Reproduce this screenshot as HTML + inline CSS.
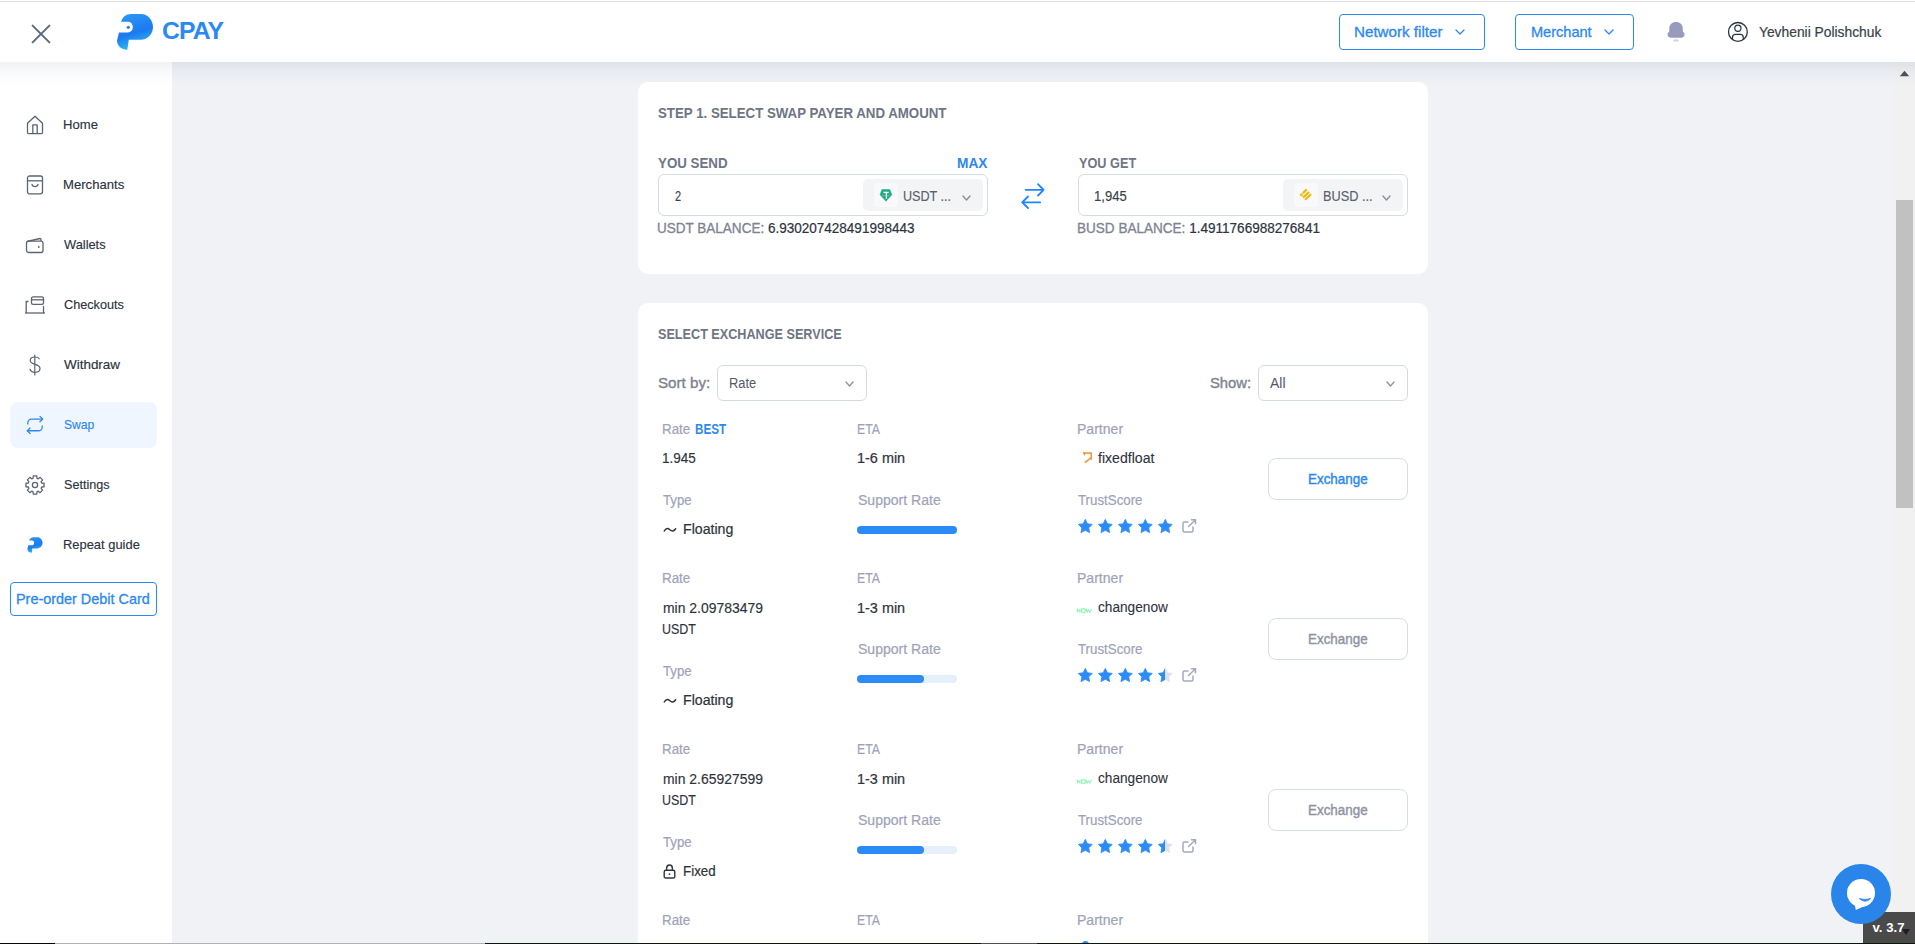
<!DOCTYPE html>
<html><head><meta charset="utf-8">
<style>
*{box-sizing:border-box;margin:0;padding:0}
html,body{width:1915px;height:944px;overflow:hidden;background:#f1f2f6;font-family:"Liberation Sans",sans-serif;color:#2e323c}
.a{position:absolute;white-space:nowrap}
</style></head><body>
<div class="a" style="left:0px;top:0px;width:1915px;height:1px;background:#fff"></div>
<div class="a" style="left:0px;top:1px;width:1915px;height:1px;background:#dcdde1"></div>
<div class="a" style="left:0px;top:2px;width:1915px;height:60px;background:#fff"></div>
<div class="a" style="left:0px;top:62px;width:1915px;height:24px;background:linear-gradient(rgba(192,200,212,0.38),rgba(192,200,212,0.16) 40%,rgba(192,200,212,0))"></div>
<div class="a" style="left:0px;top:62px;width:172px;height:882px;background:#fff"></div>
<div class="a" style="left:0px;top:62px;width:172px;height:24px;background:linear-gradient(rgba(192,200,212,0.24),rgba(192,200,212,0.1) 40%,rgba(192,200,212,0))"></div>
<svg class="a" style="left:30.5px;top:23.5px" width="20" height="20" viewBox="0 0 20 20"><path d="M1.6 1.6L18.4 18.4M18.4 1.6L1.6 18.4" stroke="#5b6b80" stroke-width="2" stroke-linecap="round"/></svg>
<svg class="a" style="left:110px;top:8px" width="50" height="50" viewBox="110 8 50 50">
<defs><linearGradient id="lg" x1="0" y1="0" x2="0.3" y2="1"><stop offset="0" stop-color="#2c9bf2"/><stop offset="0.62" stop-color="#1c7af0"/><stop offset="1" stop-color="#2bbaf4"/></linearGradient></defs>
<path d="M121.1 21.8C122.5 17 126 14.1 131 14.1L141 14.1C147.5 14.1 153 20 153 27C153 34 147.5 39.8 141 39.8L128.8 39.8L127.3 49.8C121.5 49.8 117 46 117 40.5L119 32.4L128 32.4C130.8 32.4 132.8 30.2 132.8 27.1C132.8 24 130.8 21.8 128 21.8Z" fill="url(#lg)"/>
<circle cx="128.3" cy="27.3" r="1.6" fill="#1f80ee"/></svg>
<div class="a" style="left:162.29px;top:18.72px;font-size:24.5px;font-weight:700;color:#2a89f4;line-height:24.5px;letter-spacing:-0.9px;transform:scaleX(1.0107);transform-origin:0 0;">CPAY</div>
<div class="a" style="left:1339px;top:14px;width:146px;height:36px;border:1px solid #2b88f0;border-radius:4px"></div>
<div class="a" style="left:1354.43px;top:24.85px;font-size:14.2px;font-weight:400;color:#2b88f0;line-height:14.2px;letter-spacing:0px;-webkit-text-stroke:0.3px #2b88f0;transform:scaleX(1.0688);transform-origin:0 0;">Network filter</div>
<svg class="a" style="left:1455px;top:29px" width="10" height="6" viewBox="0 0 10 6"><path d="M1 1L5.0 5L9 1" stroke="#2b88f0" stroke-width="1.3" fill="none" stroke-linecap="round" stroke-linejoin="round"/></svg>
<div class="a" style="left:1515px;top:14px;width:119px;height:36px;border:1px solid #2b88f0;border-radius:4px"></div>
<div class="a" style="left:1530.77px;top:24.85px;font-size:14.2px;font-weight:400;color:#2b88f0;line-height:14.2px;letter-spacing:0px;-webkit-text-stroke:0.3px #2b88f0;transform:scaleX(1.0258);transform-origin:0 0;">Merchant</div>
<svg class="a" style="left:1604px;top:29px" width="10" height="6" viewBox="0 0 10 6"><path d="M1 1L5.0 5L9 1" stroke="#2b88f0" stroke-width="1.3" fill="none" stroke-linecap="round" stroke-linejoin="round"/></svg>
<svg class="a" style="left:1660px;top:16px" width="30" height="30" viewBox="1660 16 30 30"><path d="M1676 22C1672.3 22 1669.3 24.5 1669.3 28.5V31.3C1669.3 31.8 1667.5 32.8 1667.5 34.6C1667.5 36.5 1669 37.8 1671 37.8H1681.1C1683.1 37.8 1684.6 36.5 1684.6 34.6C1684.6 32.8 1682.8 31.8 1682.8 31.3V28.5C1682.8 24.5 1679.8 22 1676 22Z" fill="#979cbc"/><ellipse cx="1675.9" cy="40.5" rx="2.9" ry="1.2" fill="#d3d6e4"/></svg>
<svg class="a" style="left:1720px;top:16px" width="36" height="32" viewBox="1720 16 36 32"><defs><clipPath id="uc"><circle cx="1737.9" cy="31.9" r="9.4"/></clipPath></defs><circle cx="1737.9" cy="31.9" r="9.4" fill="none" stroke="#2a3440" stroke-width="1.3"/><circle cx="1737.9" cy="28.3" r="3.1" fill="none" stroke="#2a3440" stroke-width="1.2"/><rect x="1732.5" y="34.4" width="10.8" height="12" rx="3" fill="none" stroke="#2a3440" stroke-width="1.2" clip-path="url(#uc)"/></svg>
<div class="a" style="left:1758.50px;top:24.85px;font-size:14.2px;font-weight:400;color:#3a3f49;line-height:14.2px;letter-spacing:0px;-webkit-text-stroke:0.2px #3a3f49;transform:scaleX(0.9733);transform-origin:0 0;">Yevhenii Polishchuk</div>
<div class="a" style="left:10px;top:402px;width:147px;height:46px;background:#eff6ff;border-radius:8px"></div>
<div class="a" style="left:62.71px;top:117.91px;font-size:13.2px;font-weight:400;color:#2c3340;line-height:13.2px;letter-spacing:0px;-webkit-text-stroke:0.15px #2c3340;transform:scaleX(0.9928);transform-origin:0 0;">Home</div>
<div class="a" style="left:62.71px;top:177.91px;font-size:13.2px;font-weight:400;color:#2c3340;line-height:13.2px;letter-spacing:0px;-webkit-text-stroke:0.15px #2c3340;transform:scaleX(0.9939);transform-origin:0 0;">Merchants</div>
<div class="a" style="left:63.70px;top:237.91px;font-size:13.2px;font-weight:400;color:#2c3340;line-height:13.2px;letter-spacing:0px;-webkit-text-stroke:0.15px #2c3340;transform:scaleX(0.9734);transform-origin:0 0;">Wallets</div>
<div class="a" style="left:63.70px;top:297.91px;font-size:13.2px;font-weight:400;color:#2c3340;line-height:13.2px;letter-spacing:0px;-webkit-text-stroke:0.15px #2c3340;transform:scaleX(0.9615);transform-origin:0 0;">Checkouts</div>
<div class="a" style="left:63.70px;top:357.91px;font-size:13.2px;font-weight:400;color:#2c3340;line-height:13.2px;letter-spacing:0px;-webkit-text-stroke:0.15px #2c3340;transform:scaleX(1.0192);transform-origin:0 0;">Withdraw</div>
<div class="a" style="left:63.70px;top:417.91px;font-size:13.2px;font-weight:400;color:#2b88f0;line-height:13.2px;letter-spacing:0px;-webkit-text-stroke:0.15px #2b88f0;transform:scaleX(0.9187);transform-origin:0 0;">Swap</div>
<div class="a" style="left:63.70px;top:477.91px;font-size:13.2px;font-weight:400;color:#2c3340;line-height:13.2px;letter-spacing:0px;-webkit-text-stroke:0.15px #2c3340;transform:scaleX(0.9572);transform-origin:0 0;">Settings</div>
<div class="a" style="left:62.72px;top:537.91px;font-size:13.2px;font-weight:400;color:#2c3340;line-height:13.2px;letter-spacing:0px;-webkit-text-stroke:0.15px #2c3340;transform:scaleX(0.9790);transform-origin:0 0;">Repeat guide</div>
<svg class="a" style="left:26px;top:115px" width="18" height="20" viewBox="0 0 18 20" fill="none" stroke="#5b6474" stroke-width="1.3" stroke-linejoin="round"><path d="M1.5 8.3L9 1.2L16.5 8.3V17.6C16.5 18.2 16.1 18.6 15.5 18.6H2.5C1.9 18.6 1.5 18.2 1.5 17.6Z"/><path d="M6.8 18.6V9.8H11.2V18.6"/></svg>
<svg class="a" style="left:26px;top:175px" width="18" height="20" viewBox="0 0 18 20" fill="none" stroke="#5b6474" stroke-width="1.3" stroke-linejoin="round"><rect x="1.5" y="1" width="15" height="17.8" rx="2"/><path d="M1.5 5.8H16.5"/><path d="M6 9.4C6.6 12.4 11.4 12.4 12 9.4" stroke-linecap="round"/></svg>
<svg class="a" style="left:25px;top:236px" width="20" height="18" viewBox="0 0 20 18" fill="none" stroke="#5b6474" stroke-width="1.3" stroke-linejoin="round"><path d="M2 5.5L15 2.5C15.5 2.4 16 2.8 16 3.3V5"/><rect x="1.5" y="5.2" width="16.5" height="11.3" rx="2"/><circle cx="13.8" cy="11" r="0.9" fill="#5b6474" stroke="none"/></svg>
<svg class="a" style="left:24px;top:295px" width="22" height="20" viewBox="0 0 22 20" fill="none" stroke="#5b6474" stroke-width="1.3"><path d="M1 18H21"/><path d="M2.2 18V6.5H4.5"/><path d="M19.5 18V11"/><rect x="7.5" y="1.8" width="12" height="7.5" rx="1.6"/><path d="M7.5 4.8H19.5"/></svg>
<svg class="a" style="left:28px;top:354px" width="14" height="22" viewBox="0 0 14 22" fill="none" stroke="#5b6474" stroke-width="1.2" stroke-linecap="round"><path d="M6.8 1V21"/><path d="M11.2 4.8C10.6 3.7 9.2 3 7 3C4 3 2.2 4.5 2.2 6.6C2.2 11.6 12 9.2 12 14.5C12 16.8 10 18.3 7 18.3C4.3 18.3 2.6 17.2 2 15.3"/></svg>
<svg class="a" style="left:26px;top:414.5px" width="18" height="19.8" viewBox="0 0 20 22" fill="none" stroke="#2b88f0" stroke-width="1.4" stroke-linecap="round" stroke-linejoin="round"><path d="M15.5 1.5L18.5 4.5L15.5 7.5"/><path d="M2 10V8.5C2 6.3 3.8 4.5 6 4.5H18.5"/><path d="M4.5 20.5L1.5 17.5L4.5 14.5"/><path d="M18 12V13.5C18 15.7 16.2 17.5 14 17.5H1.5"/></svg>
<svg class="a" style="left:25px;top:475px" width="20" height="20" viewBox="0 0 20 20" fill="none" stroke="#5b6474" stroke-width="1.3" stroke-linejoin="round"><path d="M8.01 3.29 L8.24 0.97 L11.76 0.97 L11.99 3.29 L13.34 3.85 L15.14 2.37 L17.63 4.86 L16.15 6.66 L16.71 8.01 L19.03 8.24 L19.03 11.76 L16.71 11.99 L16.15 13.34 L17.63 15.14 L15.14 17.63 L13.34 16.15 L11.99 16.71 L11.76 19.03 L8.24 19.03 L8.01 16.71 L6.66 16.15 L4.86 17.63 L2.37 15.14 L3.85 13.34 L3.29 11.99 L0.97 11.76 L0.97 8.24 L3.29 8.01 L3.85 6.66 L2.37 4.86 L4.86 2.37 L6.66 3.85Z"/><circle cx="10" cy="10" r="2.6"/></svg>
<svg class="a" style="left:27px;top:537px" width="16" height="16.5" viewBox="116 13.5 38 38" preserveAspectRatio="none"><path d="M121.1 21.8C122.5 17 126 14.1 131 14.1L141 14.1C147.5 14.1 153 20 153 27C153 34 147.5 39.8 141 39.8L128.8 39.8L127.3 49.8C121.5 49.8 117 46 117 40.5L119 32.4L128 32.4C130.8 32.4 132.8 30.2 132.8 27.1C132.8 24 130.8 21.8 128 21.8Z" fill="url(#lg)"/></svg>
<div class="a" style="left:10px;top:582px;width:147px;height:34px;border:1px solid #2b88f0;border-radius:4px"></div>
<div class="a" style="left:16.48px;top:592.15px;font-size:14.2px;font-weight:400;color:#2b88f0;line-height:14.2px;letter-spacing:0px;-webkit-text-stroke:0.3px #2b88f0;transform:scaleX(1.0155);transform-origin:0 0;">Pre-order Debit Card</div>
<div class="a" style="left:638px;top:82px;width:790px;height:192px;background:#fff;border-radius:10px"></div>
<div class="a" style="left:658.00px;top:105.69px;font-size:14.6px;font-weight:700;color:#6e7585;line-height:14.6px;letter-spacing:0px;transform:scaleX(0.9098);transform-origin:0 0;">STEP 1. SELECT SWAP PAYER AND AMOUNT</div>
<div class="a" style="left:658.00px;top:155.78px;font-size:14px;font-weight:700;color:#6e7585;line-height:14px;letter-spacing:0px;transform:scaleX(0.9519);transform-origin:0 0;">YOU SEND</div>
<div class="a" style="left:956.80px;top:155.78px;font-size:14px;font-weight:700;color:#2b88f0;line-height:14px;letter-spacing:0px;transform:scaleX(0.9757);transform-origin:0 0;">MAX</div>
<div class="a" style="left:658px;top:174px;width:330px;height:42px;border:1px solid #d5dce7;border-radius:6px;background:#fff"></div>
<div class="a" style="left:675.20px;top:188.98px;font-size:14px;font-weight:400;color:#3a3f48;line-height:14px;letter-spacing:0px;-webkit-text-stroke:0.15px #3a3f48;transform:scaleX(0.7875);transform-origin:0 0;">2</div>
<div class="a" style="left:863px;top:179px;width:120px;height:32px;background:#f3f4f6;border-radius:5px"></div>
<div class="a" style="left:874px;top:183px;width:24px;height:24px;background:#f9f9fb;border-radius:4px"></div>
<div class="a" style="left:902.90px;top:188.98px;font-size:14px;font-weight:400;color:#5b606b;line-height:14px;letter-spacing:0px;-webkit-text-stroke:0.15px #5b606b;transform:scaleX(0.9000);transform-origin:0 0;">USDT ...</div>
<svg class="a" style="left:961.5px;top:194.5px" width="9" height="6" viewBox="0 0 9 6"><path d="M1 1L4.5 5L8 1" stroke="#8a8f9b" stroke-width="1.4" fill="none" stroke-linecap="round" stroke-linejoin="round"/></svg>
<div class="a" style="left:657.03px;top:220.88px;font-size:14px;font-weight:400;color:#7d8392;line-height:14px;letter-spacing:0px;-webkit-text-stroke:0.3px #7d8392;transform:scaleX(0.9655);transform-origin:0 0;">USDT BALANCE: <span style="color:#2d3440;-webkit-text-stroke:0.2px #2d3440">6.930207428491998443</span></div>
<div class="a" style="left:1078px;top:174px;width:330px;height:42px;border:1px solid #d5dce7;border-radius:6px;background:#fff"></div>
<div class="a" style="left:1094.27px;top:188.98px;font-size:14px;font-weight:400;color:#3a3f48;line-height:14px;letter-spacing:0px;-webkit-text-stroke:0.15px #3a3f48;transform:scaleX(0.9344);transform-origin:0 0;">1,945</div>
<div class="a" style="left:1283px;top:179px;width:120px;height:32px;background:#f3f4f6;border-radius:5px"></div>
<div class="a" style="left:1294px;top:183px;width:24px;height:24px;background:#f9f9fb;border-radius:4px"></div>
<div class="a" style="left:1322.89px;top:188.98px;font-size:14px;font-weight:400;color:#5b606b;line-height:14px;letter-spacing:0px;-webkit-text-stroke:0.15px #5b606b;transform:scaleX(0.9093);transform-origin:0 0;">BUSD ...</div>
<svg class="a" style="left:1381.5px;top:194.5px" width="9" height="6" viewBox="0 0 9 6"><path d="M1 1L4.5 5L8 1" stroke="#8a8f9b" stroke-width="1.4" fill="none" stroke-linecap="round" stroke-linejoin="round"/></svg>
<div class="a" style="left:1077.03px;top:220.88px;font-size:14px;font-weight:400;color:#7d8392;line-height:14px;letter-spacing:0px;-webkit-text-stroke:0.3px #7d8392;transform:scaleX(0.9674);transform-origin:0 0;">BUSD BALANCE: <span style="color:#2d3440;-webkit-text-stroke:0.2px #2d3440">1.4911766988276841</span></div>
<div class="a" style="left:1078.80px;top:155.78px;font-size:14px;font-weight:700;color:#6e7585;line-height:14px;letter-spacing:0px;transform:scaleX(0.9077);transform-origin:0 0;">YOU GET</div>
<svg class="a" style="left:879px;top:188.5px" width="14" height="14" viewBox="0 0 14 14"><path d="M2.9 0.5H10.8L12.9 5.8L7 12.3L1 5.8Z" fill="#22ab84" stroke="#22ab84" stroke-width="0.5" stroke-linejoin="round"/><path d="M4.5 3.4H9.7M7.4 3.4V9.8" stroke="#fff" stroke-width="1.3"/><path d="M3 6C5.5 6.8 8.5 6.8 11 6" stroke="#7fd6bb" stroke-width="0.5" fill="none"/></svg>
<svg class="a" style="left:1290px;top:180px" width="30" height="30" viewBox="1290 180 30 30" stroke="#efb80c" stroke-width="2.2" stroke-linecap="round"><path d="M1303.4 192.6L1306.1 190"/><path d="M1303.6 197.1L1308.3 192.6"/><path d="M1305.7 199.2L1310.4 194.7"/><circle cx="1301.4" cy="194.8" r="0.5" fill="#efb80c"/></svg>
<svg class="a" style="left:1012px;top:175px" width="40" height="40" viewBox="0 0 40 40" fill="none" stroke="#1f86fb" stroke-width="1.8" stroke-linecap="round" stroke-linejoin="round"><path d="M13.6 14.8H31.6M26 9.2L31.6 14.8L26 20.5"/><path d="M28.2 27.3H10.2M16 21.5L10.2 27.3L16 33"/></svg>
<div class="a" style="left:638px;top:303px;width:790px;height:700px;background:#fff;border-radius:10px"></div>
<div class="a" style="left:658.00px;top:326.95px;font-size:14.2px;font-weight:700;color:#6e7585;line-height:14.2px;letter-spacing:0px;transform:scaleX(0.8906);transform-origin:0 0;">SELECT EXCHANGE SERVICE</div>
<div class="a" style="left:658.00px;top:375.78px;font-size:14px;font-weight:400;color:#7e8390;line-height:14px;letter-spacing:0px;-webkit-text-stroke:0.35px #7e8390;transform:scaleX(1.0813);transform-origin:0 0;">Sort by:</div>
<div class="a" style="left:717px;top:365px;width:150px;height:36px;border:1px solid #d3dae6;border-radius:6px;background:#fff"></div>
<div class="a" style="left:728.88px;top:375.78px;font-size:14px;font-weight:400;color:#525868;line-height:14px;letter-spacing:0px;transform:scaleX(0.9206);transform-origin:0 0;">Rate</div>
<svg class="a" style="left:844.5px;top:381px" width="9" height="6" viewBox="0 0 9 6"><path d="M1 1L4.5 5L8 1" stroke="#8e94a5" stroke-width="1.4" fill="none" stroke-linecap="round" stroke-linejoin="round"/></svg>
<div class="a" style="left:1210.00px;top:375.78px;font-size:14px;font-weight:400;color:#7e8390;line-height:14px;letter-spacing:0px;-webkit-text-stroke:0.35px #7e8390;transform:scaleX(1.0573);transform-origin:0 0;">Show:</div>
<div class="a" style="left:1258px;top:365px;width:150px;height:36px;border:1px solid #d3dae6;border-radius:6px;background:#fff"></div>
<div class="a" style="left:1270.00px;top:375.78px;font-size:14px;font-weight:400;color:#525868;line-height:14px;letter-spacing:0px;">All</div>
<svg class="a" style="left:1386px;top:381px" width="9" height="6" viewBox="0 0 9 6"><path d="M1 1L4.5 5L8 1" stroke="#8e94a5" stroke-width="1.4" fill="none" stroke-linecap="round" stroke-linejoin="round"/></svg>
<div class="a" style="left:661.64px;top:421.78px;font-size:14px;font-weight:400;color:#9ea2ba;line-height:14px;letter-spacing:0px;-webkit-text-stroke:0.2px #9ea2ba;transform:scaleX(0.9553);transform-origin:0 0;">Rate</div>
<div class="a" style="left:695.00px;top:421.78px;font-size:14px;font-weight:700;color:#2b88f0;line-height:14px;letter-spacing:0px;transform:scaleX(0.8310);transform-origin:0 0;">BEST</div>
<div class="a" style="left:661.64px;top:451.38px;font-size:14px;font-weight:400;color:#2f333c;line-height:14px;letter-spacing:0px;-webkit-text-stroke:0.15px #2f333c;transform:scaleX(0.9636);transform-origin:0 0;">1.945</div>
<div class="a" style="left:662.60px;top:492.98px;font-size:14px;font-weight:400;color:#9ea2ba;line-height:14px;letter-spacing:0px;-webkit-text-stroke:0.2px #9ea2ba;transform:scaleX(0.9455);transform-origin:0 0;">Type</div>
<svg class="a" style="left:663px;top:525.90px" width="14" height="8" viewBox="0 0 14 8"><path d="M1.3 5C2.8 2.4 4.6 1.8 6.8 3.8C9 5.8 10.8 5.5 12.7 2.8" stroke="#30343c" stroke-width="1.5" fill="none" stroke-linecap="round"/></svg>
<div class="a" style="left:682.69px;top:522.28px;font-size:14px;font-weight:400;color:#2f333c;line-height:14px;letter-spacing:0px;-webkit-text-stroke:0.2px #2f333c;transform:scaleX(1.0100);transform-origin:0 0;">Floating</div>
<div class="a" style="left:857.03px;top:421.78px;font-size:14px;font-weight:400;color:#9ea2ba;line-height:14px;letter-spacing:0px;-webkit-text-stroke:0.2px #9ea2ba;transform:scaleX(0.8743);transform-origin:0 0;">ETA</div>
<div class="a" style="left:856.87px;top:451.18px;font-size:14px;font-weight:400;color:#2f333c;line-height:14px;letter-spacing:0px;-webkit-text-stroke:0.2px #2f333c;transform:scaleX(1.0313);transform-origin:0 0;">1-6 min</div>
<div class="a" style="left:857.90px;top:492.98px;font-size:14px;font-weight:400;color:#9ea2ba;line-height:14px;letter-spacing:0px;-webkit-text-stroke:0.2px #9ea2ba;transform:scaleX(1.0035);transform-origin:0 0;">Support Rate</div>
<div class="a" style="left:857px;top:526px;width:100px;height:8px;border-radius:4px;background:#e6f0fc"><div style="position:absolute;left:0;top:0;width:100px;height:8px;border-radius:4px;background:#2b8cf8"></div></div>
<div class="a" style="left:1077.30px;top:421.78px;font-size:14px;font-weight:400;color:#9ea2ba;line-height:14px;letter-spacing:0px;-webkit-text-stroke:0.2px #9ea2ba;transform:scaleX(1.0034);transform-origin:0 0;">Partner</div>
<svg class="a" style="left:1078px;top:446.00px" width="20" height="22" viewBox="0 0 20 22" fill="none" stroke="#f68d30" stroke-width="1.5" stroke-linecap="round" stroke-linejoin="round"><path d="M5.6 6.9H13.2V13.2"/><path d="M6 7L6.7 8.6"/><path d="M12.6 12L7.3 16.3"/></svg>
<div class="a" style="left:1098.20px;top:450.58px;font-size:14px;font-weight:400;color:#2f333c;line-height:14px;letter-spacing:0px;-webkit-text-stroke:0.1px #2f333c;transform:scaleX(1.0063);transform-origin:0 0;">fixedfloat</div>
<div class="a" style="left:1078.30px;top:492.98px;font-size:14px;font-weight:400;color:#9ea2ba;line-height:14px;letter-spacing:0px;-webkit-text-stroke:0.2px #9ea2ba;transform:scaleX(0.9493);transform-origin:0 0;">TrustScore</div>
<svg class="a" style="left:1078px;top:518.6px" width="15" height="15" viewBox="0 0 15 15"><path d="M7.30 0.40 L9.39 4.83 L14.24 5.44 L10.68 8.80 L11.59 13.61 L7.30 11.25 L3.01 13.61 L3.92 8.80 L0.36 5.44 L5.21 4.83Z" fill="#2b8cf8" stroke="#2b8cf8" stroke-width="0.9" stroke-linejoin="round"/></svg>
<svg class="a" style="left:1098px;top:518.6px" width="15" height="15" viewBox="0 0 15 15"><path d="M7.30 0.40 L9.39 4.83 L14.24 5.44 L10.68 8.80 L11.59 13.61 L7.30 11.25 L3.01 13.61 L3.92 8.80 L0.36 5.44 L5.21 4.83Z" fill="#2b8cf8" stroke="#2b8cf8" stroke-width="0.9" stroke-linejoin="round"/></svg>
<svg class="a" style="left:1118px;top:518.6px" width="15" height="15" viewBox="0 0 15 15"><path d="M7.30 0.40 L9.39 4.83 L14.24 5.44 L10.68 8.80 L11.59 13.61 L7.30 11.25 L3.01 13.61 L3.92 8.80 L0.36 5.44 L5.21 4.83Z" fill="#2b8cf8" stroke="#2b8cf8" stroke-width="0.9" stroke-linejoin="round"/></svg>
<svg class="a" style="left:1138px;top:518.6px" width="15" height="15" viewBox="0 0 15 15"><path d="M7.30 0.40 L9.39 4.83 L14.24 5.44 L10.68 8.80 L11.59 13.61 L7.30 11.25 L3.01 13.61 L3.92 8.80 L0.36 5.44 L5.21 4.83Z" fill="#2b8cf8" stroke="#2b8cf8" stroke-width="0.9" stroke-linejoin="round"/></svg>
<svg class="a" style="left:1158px;top:518.6px" width="15" height="15" viewBox="0 0 15 15"><path d="M7.30 0.40 L9.39 4.83 L14.24 5.44 L10.68 8.80 L11.59 13.61 L7.30 11.25 L3.01 13.61 L3.92 8.80 L0.36 5.44 L5.21 4.83Z" fill="#2b8cf8" stroke="#2b8cf8" stroke-width="0.9" stroke-linejoin="round"/></svg>
<svg class="a" style="left:1182px;top:518.6px" width="15" height="14" viewBox="0 0 15 14" fill="none" stroke="#a5a9bd" stroke-width="1.5" stroke-linecap="round" stroke-linejoin="round"><path d="M6 3H2.5C1.7 3 1 3.7 1 4.5V11.5C1 12.3 1.7 13 2.5 13H9.5C10.3 13 11 12.3 11 11.5V8"/><path d="M6.5 7.5L13.5 0.8M9.5 0.8H13.5V4.8"/></svg>
<div class="a" style="left:1268px;top:458px;width:140px;height:42px;border:1px solid #d5dde8;border-radius:8px;background:#fff"></div>
<div class="a" style="left:1307.94px;top:471.98px;font-size:14px;font-weight:400;color:#2b88f0;line-height:14px;letter-spacing:0px;-webkit-text-stroke:0.4px #2b88f0;transform:scaleX(0.9580);transform-origin:0 0;">Exchange</div>
<div class="a" style="left:661.64px;top:571.28px;font-size:14px;font-weight:400;color:#9ea2ba;line-height:14px;letter-spacing:0px;-webkit-text-stroke:0.2px #9ea2ba;transform:scaleX(0.9553);transform-origin:0 0;">Rate</div>
<div class="a" style="left:662.60px;top:600.88px;font-size:14px;font-weight:400;color:#2f333c;line-height:14px;letter-spacing:0px;-webkit-text-stroke:0.15px #2f333c;transform:scaleX(0.9948);transform-origin:0 0;">min 2.09783479</div>
<div class="a" style="left:661.71px;top:621.98px;font-size:14px;font-weight:400;color:#2f333c;line-height:14px;letter-spacing:0px;-webkit-text-stroke:0.15px #2f333c;transform:scaleX(0.8893);transform-origin:0 0;">USDT</div>
<div class="a" style="left:662.60px;top:664.18px;font-size:14px;font-weight:400;color:#9ea2ba;line-height:14px;letter-spacing:0px;-webkit-text-stroke:0.2px #9ea2ba;transform:scaleX(0.9455);transform-origin:0 0;">Type</div>
<svg class="a" style="left:663px;top:697.10px" width="14" height="8" viewBox="0 0 14 8"><path d="M1.3 5C2.8 2.4 4.6 1.8 6.8 3.8C9 5.8 10.8 5.5 12.7 2.8" stroke="#30343c" stroke-width="1.5" fill="none" stroke-linecap="round"/></svg>
<div class="a" style="left:682.69px;top:693.48px;font-size:14px;font-weight:400;color:#2f333c;line-height:14px;letter-spacing:0px;-webkit-text-stroke:0.2px #2f333c;transform:scaleX(1.0100);transform-origin:0 0;">Floating</div>
<div class="a" style="left:857.03px;top:571.28px;font-size:14px;font-weight:400;color:#9ea2ba;line-height:14px;letter-spacing:0px;-webkit-text-stroke:0.2px #9ea2ba;transform:scaleX(0.8743);transform-origin:0 0;">ETA</div>
<div class="a" style="left:856.87px;top:600.68px;font-size:14px;font-weight:400;color:#2f333c;line-height:14px;letter-spacing:0px;-webkit-text-stroke:0.2px #2f333c;transform:scaleX(1.0313);transform-origin:0 0;">1-3 min</div>
<div class="a" style="left:857.90px;top:642.48px;font-size:14px;font-weight:400;color:#9ea2ba;line-height:14px;letter-spacing:0px;-webkit-text-stroke:0.2px #9ea2ba;transform:scaleX(1.0035);transform-origin:0 0;">Support Rate</div>
<div class="a" style="left:857px;top:675px;width:100px;height:8px;border-radius:4px;background:#e6f0fc"><div style="position:absolute;left:0;top:0;width:67px;height:8px;border-radius:4px;background:#2b8cf8"></div></div>
<div class="a" style="left:1077.30px;top:571.28px;font-size:14px;font-weight:400;color:#9ea2ba;line-height:14px;letter-spacing:0px;-webkit-text-stroke:0.2px #9ea2ba;transform:scaleX(1.0034);transform-origin:0 0;">Partner</div>
<svg class="a" style="left:1076px;top:607.50px" width="17" height="5" viewBox="0 0 17 5" fill="none" stroke="#74eea6" stroke-width="0.9" stroke-linejoin="round"><path d="M1.3 4.4V0.9L3.9 4.2V0.8"/><rect x="5.3" y="0.9" width="3.9" height="3.4"/><path d="M10.2 0.8L11.2 4.3L12.5 1.6L13.7 4.3L15.6 0.8"/></svg>
<div class="a" style="left:1097.80px;top:599.58px;font-size:14px;font-weight:400;color:#2f333c;line-height:14px;letter-spacing:0px;-webkit-text-stroke:0.1px #2f333c;transform:scaleX(0.9751);transform-origin:0 0;">changenow</div>
<div class="a" style="left:1078.30px;top:642.48px;font-size:14px;font-weight:400;color:#9ea2ba;line-height:14px;letter-spacing:0px;-webkit-text-stroke:0.2px #9ea2ba;transform:scaleX(0.9493);transform-origin:0 0;">TrustScore</div>
<svg class="a" style="left:1078px;top:668.1px" width="15" height="15" viewBox="0 0 15 15"><path d="M7.30 0.40 L9.39 4.83 L14.24 5.44 L10.68 8.80 L11.59 13.61 L7.30 11.25 L3.01 13.61 L3.92 8.80 L0.36 5.44 L5.21 4.83Z" fill="#2b8cf8" stroke="#2b8cf8" stroke-width="0.9" stroke-linejoin="round"/></svg>
<svg class="a" style="left:1098px;top:668.1px" width="15" height="15" viewBox="0 0 15 15"><path d="M7.30 0.40 L9.39 4.83 L14.24 5.44 L10.68 8.80 L11.59 13.61 L7.30 11.25 L3.01 13.61 L3.92 8.80 L0.36 5.44 L5.21 4.83Z" fill="#2b8cf8" stroke="#2b8cf8" stroke-width="0.9" stroke-linejoin="round"/></svg>
<svg class="a" style="left:1118px;top:668.1px" width="15" height="15" viewBox="0 0 15 15"><path d="M7.30 0.40 L9.39 4.83 L14.24 5.44 L10.68 8.80 L11.59 13.61 L7.30 11.25 L3.01 13.61 L3.92 8.80 L0.36 5.44 L5.21 4.83Z" fill="#2b8cf8" stroke="#2b8cf8" stroke-width="0.9" stroke-linejoin="round"/></svg>
<svg class="a" style="left:1138px;top:668.1px" width="15" height="15" viewBox="0 0 15 15"><path d="M7.30 0.40 L9.39 4.83 L14.24 5.44 L10.68 8.80 L11.59 13.61 L7.30 11.25 L3.01 13.61 L3.92 8.80 L0.36 5.44 L5.21 4.83Z" fill="#2b8cf8" stroke="#2b8cf8" stroke-width="0.9" stroke-linejoin="round"/></svg>
<svg class="a" style="left:1158px;top:668.1px" width="15" height="15" viewBox="0 0 15 15"><defs><clipPath id="hc668.1"><rect x="0" y="0" width="7" height="14"/></clipPath></defs><path d="M7.30 0.40 L9.39 4.83 L14.24 5.44 L10.68 8.80 L11.59 13.61 L7.30 11.25 L3.01 13.61 L3.92 8.80 L0.36 5.44 L5.21 4.83Z" fill="#dde2ea" stroke="#dde2ea" stroke-width="0.9" stroke-linejoin="round"/><path d="M7.30 0.40 L9.39 4.83 L14.24 5.44 L10.68 8.80 L11.59 13.61 L7.30 11.25 L3.01 13.61 L3.92 8.80 L0.36 5.44 L5.21 4.83Z" fill="#2b8cf8" stroke="#2b8cf8" stroke-width="0.9" stroke-linejoin="round" clip-path="url(#hc668.1)"/></svg>
<svg class="a" style="left:1182px;top:668.1px" width="15" height="14" viewBox="0 0 15 14" fill="none" stroke="#a5a9bd" stroke-width="1.5" stroke-linecap="round" stroke-linejoin="round"><path d="M6 3H2.5C1.7 3 1 3.7 1 4.5V11.5C1 12.3 1.7 13 2.5 13H9.5C10.3 13 11 12.3 11 11.5V8"/><path d="M6.5 7.5L13.5 0.8M9.5 0.8H13.5V4.8"/></svg>
<div class="a" style="left:1268px;top:618.0px;width:140px;height:42px;border:1px solid #d5dde8;border-radius:8px;background:#fff"></div>
<div class="a" style="left:1307.94px;top:631.98px;font-size:14px;font-weight:400;color:#8e93a3;line-height:14px;letter-spacing:0px;-webkit-text-stroke:0.4px #8e93a3;transform:scaleX(0.9580);transform-origin:0 0;">Exchange</div>
<div class="a" style="left:661.64px;top:742.28px;font-size:14px;font-weight:400;color:#9ea2ba;line-height:14px;letter-spacing:0px;-webkit-text-stroke:0.2px #9ea2ba;transform:scaleX(0.9553);transform-origin:0 0;">Rate</div>
<div class="a" style="left:662.60px;top:771.88px;font-size:14px;font-weight:400;color:#2f333c;line-height:14px;letter-spacing:0px;-webkit-text-stroke:0.15px #2f333c;transform:scaleX(0.9948);transform-origin:0 0;">min 2.65927599</div>
<div class="a" style="left:661.71px;top:792.98px;font-size:14px;font-weight:400;color:#2f333c;line-height:14px;letter-spacing:0px;-webkit-text-stroke:0.15px #2f333c;transform:scaleX(0.8893);transform-origin:0 0;">USDT</div>
<div class="a" style="left:662.60px;top:835.18px;font-size:14px;font-weight:400;color:#9ea2ba;line-height:14px;letter-spacing:0px;-webkit-text-stroke:0.2px #9ea2ba;transform:scaleX(0.9455);transform-origin:0 0;">Type</div>
<svg class="a" style="left:663px;top:864.40px" width="13" height="15" viewBox="0 0 13 15" fill="none" stroke="#30343c" stroke-width="1.4"><rect x="1.2" y="6.3" width="10.6" height="7.7" rx="1.6"/><path d="M3.6 6.3V4.3C3.6 2.4 4.8 1 6.5 1C8.2 1 9.4 2.4 9.4 4.3V6.3"/><circle cx="6.5" cy="10.1" r="0.9" fill="#30343c" stroke="none"/></svg>
<div class="a" style="left:682.54px;top:864.48px;font-size:14px;font-weight:400;color:#2f333c;line-height:14px;letter-spacing:0px;-webkit-text-stroke:0.2px #2f333c;transform:scaleX(0.9554);transform-origin:0 0;">Fixed</div>
<div class="a" style="left:857.03px;top:742.28px;font-size:14px;font-weight:400;color:#9ea2ba;line-height:14px;letter-spacing:0px;-webkit-text-stroke:0.2px #9ea2ba;transform:scaleX(0.8743);transform-origin:0 0;">ETA</div>
<div class="a" style="left:856.87px;top:771.68px;font-size:14px;font-weight:400;color:#2f333c;line-height:14px;letter-spacing:0px;-webkit-text-stroke:0.2px #2f333c;transform:scaleX(1.0313);transform-origin:0 0;">1-3 min</div>
<div class="a" style="left:857.90px;top:813.48px;font-size:14px;font-weight:400;color:#9ea2ba;line-height:14px;letter-spacing:0px;-webkit-text-stroke:0.2px #9ea2ba;transform:scaleX(1.0035);transform-origin:0 0;">Support Rate</div>
<div class="a" style="left:857px;top:846px;width:100px;height:8px;border-radius:4px;background:#e6f0fc"><div style="position:absolute;left:0;top:0;width:67px;height:8px;border-radius:4px;background:#2b8cf8"></div></div>
<div class="a" style="left:1077.30px;top:742.28px;font-size:14px;font-weight:400;color:#9ea2ba;line-height:14px;letter-spacing:0px;-webkit-text-stroke:0.2px #9ea2ba;transform:scaleX(1.0034);transform-origin:0 0;">Partner</div>
<svg class="a" style="left:1076px;top:778.50px" width="17" height="5" viewBox="0 0 17 5" fill="none" stroke="#74eea6" stroke-width="0.9" stroke-linejoin="round"><path d="M1.3 4.4V0.9L3.9 4.2V0.8"/><rect x="5.3" y="0.9" width="3.9" height="3.4"/><path d="M10.2 0.8L11.2 4.3L12.5 1.6L13.7 4.3L15.6 0.8"/></svg>
<div class="a" style="left:1097.80px;top:770.58px;font-size:14px;font-weight:400;color:#2f333c;line-height:14px;letter-spacing:0px;-webkit-text-stroke:0.1px #2f333c;transform:scaleX(0.9751);transform-origin:0 0;">changenow</div>
<div class="a" style="left:1078.30px;top:813.48px;font-size:14px;font-weight:400;color:#9ea2ba;line-height:14px;letter-spacing:0px;-webkit-text-stroke:0.2px #9ea2ba;transform:scaleX(0.9493);transform-origin:0 0;">TrustScore</div>
<svg class="a" style="left:1078px;top:839.1px" width="15" height="15" viewBox="0 0 15 15"><path d="M7.30 0.40 L9.39 4.83 L14.24 5.44 L10.68 8.80 L11.59 13.61 L7.30 11.25 L3.01 13.61 L3.92 8.80 L0.36 5.44 L5.21 4.83Z" fill="#2b8cf8" stroke="#2b8cf8" stroke-width="0.9" stroke-linejoin="round"/></svg>
<svg class="a" style="left:1098px;top:839.1px" width="15" height="15" viewBox="0 0 15 15"><path d="M7.30 0.40 L9.39 4.83 L14.24 5.44 L10.68 8.80 L11.59 13.61 L7.30 11.25 L3.01 13.61 L3.92 8.80 L0.36 5.44 L5.21 4.83Z" fill="#2b8cf8" stroke="#2b8cf8" stroke-width="0.9" stroke-linejoin="round"/></svg>
<svg class="a" style="left:1118px;top:839.1px" width="15" height="15" viewBox="0 0 15 15"><path d="M7.30 0.40 L9.39 4.83 L14.24 5.44 L10.68 8.80 L11.59 13.61 L7.30 11.25 L3.01 13.61 L3.92 8.80 L0.36 5.44 L5.21 4.83Z" fill="#2b8cf8" stroke="#2b8cf8" stroke-width="0.9" stroke-linejoin="round"/></svg>
<svg class="a" style="left:1138px;top:839.1px" width="15" height="15" viewBox="0 0 15 15"><path d="M7.30 0.40 L9.39 4.83 L14.24 5.44 L10.68 8.80 L11.59 13.61 L7.30 11.25 L3.01 13.61 L3.92 8.80 L0.36 5.44 L5.21 4.83Z" fill="#2b8cf8" stroke="#2b8cf8" stroke-width="0.9" stroke-linejoin="round"/></svg>
<svg class="a" style="left:1158px;top:839.1px" width="15" height="15" viewBox="0 0 15 15"><defs><clipPath id="hc839.1"><rect x="0" y="0" width="7" height="14"/></clipPath></defs><path d="M7.30 0.40 L9.39 4.83 L14.24 5.44 L10.68 8.80 L11.59 13.61 L7.30 11.25 L3.01 13.61 L3.92 8.80 L0.36 5.44 L5.21 4.83Z" fill="#dde2ea" stroke="#dde2ea" stroke-width="0.9" stroke-linejoin="round"/><path d="M7.30 0.40 L9.39 4.83 L14.24 5.44 L10.68 8.80 L11.59 13.61 L7.30 11.25 L3.01 13.61 L3.92 8.80 L0.36 5.44 L5.21 4.83Z" fill="#2b8cf8" stroke="#2b8cf8" stroke-width="0.9" stroke-linejoin="round" clip-path="url(#hc839.1)"/></svg>
<svg class="a" style="left:1182px;top:839.1px" width="15" height="14" viewBox="0 0 15 14" fill="none" stroke="#a5a9bd" stroke-width="1.5" stroke-linecap="round" stroke-linejoin="round"><path d="M6 3H2.5C1.7 3 1 3.7 1 4.5V11.5C1 12.3 1.7 13 2.5 13H9.5C10.3 13 11 12.3 11 11.5V8"/><path d="M6.5 7.5L13.5 0.8M9.5 0.8H13.5V4.8"/></svg>
<div class="a" style="left:1268px;top:789.0px;width:140px;height:42px;border:1px solid #d5dde8;border-radius:8px;background:#fff"></div>
<div class="a" style="left:1307.94px;top:802.98px;font-size:14px;font-weight:400;color:#8e93a3;line-height:14px;letter-spacing:0px;-webkit-text-stroke:0.4px #8e93a3;transform:scaleX(0.9580);transform-origin:0 0;">Exchange</div>
<div class="a" style="left:661.64px;top:912.78px;font-size:14px;font-weight:400;color:#9ea2ba;line-height:14px;letter-spacing:0px;-webkit-text-stroke:0.2px #9ea2ba;transform:scaleX(0.9553);transform-origin:0 0;">Rate</div>
<div class="a" style="left:857.03px;top:912.78px;font-size:14px;font-weight:400;color:#9ea2ba;line-height:14px;letter-spacing:0px;-webkit-text-stroke:0.2px #9ea2ba;transform:scaleX(0.8743);transform-origin:0 0;">ETA</div>
<div class="a" style="left:1077.30px;top:912.78px;font-size:14px;font-weight:400;color:#9ea2ba;line-height:14px;letter-spacing:0px;-webkit-text-stroke:0.2px #9ea2ba;transform:scaleX(1.0034);transform-origin:0 0;">Partner</div>
<div class="a" style="left:1081.5px;top:941px;width:7px;height:7px;border-radius:50%;background:#2b8cf8"></div>
<div class="a" style="left:1894px;top:62px;width:21px;height:882px;background:#f1f1f1"></div>
<div class="a" style="left:1896px;top:200px;width:17px;height:308px;background:#c1c1c1"></div>
<div class="a" style="left:1894px;top:62px;width:21px;height:24px;background:linear-gradient(rgba(192,200,212,0.38),rgba(192,200,212,0.16) 40%,rgba(192,200,212,0))"></div>
<svg class="a" style="left:1899px;top:70px" width="11" height="7" viewBox="0 0 11 7"><path d="M5.5 0.7L10.2 6.2H0.8Z" fill="#505050"/></svg>
<div class="a" style="left:1863px;top:912px;width:52px;height:31px;background:#4a4a4a"></div>
<div class="a" style="left:1872.50px;top:920.91px;font-size:13.2px;font-weight:700;color:#fff;line-height:13.2px;letter-spacing:0px;">v. 3.7</div>
<svg class="a" style="left:1902px;top:929px" width="8" height="6" viewBox="0 0 8 6"><path d="M0 0H8L4 6Z" fill="#1e1e1e"/></svg>
<div class="a" style="left:1831px;top:864px;width:60px;height:60px;border-radius:50%;background:#2a85ea"></div>
<svg class="a" style="left:1840px;top:872px" width="44" height="44" viewBox="0 0 44 44"><circle cx="21" cy="21" r="14" fill="#fff"/><path d="M14 30L15.9 38L30 31.5Z" fill="#fff"/><path d="M19.4 26.6Q25 31.8 30.6 26.6Q25 28.3 19.4 26.6Z" fill="#2a85ea" stroke="#2a85ea" stroke-width="0.8" stroke-linejoin="round"/></svg>
<div class="a" style="left:0px;top:943px;width:55px;height:1px;background:#060606"></div>
<div class="a" style="left:55px;top:943px;width:430px;height:1px;background:#b2b2b2"></div>
<div class="a" style="left:485px;top:943px;width:1430px;height:1px;background:#0d180d"></div>
<div class="a" style="left:981px;top:943px;width:56px;height:1px;background:#4d524d"></div>
</body></html>
